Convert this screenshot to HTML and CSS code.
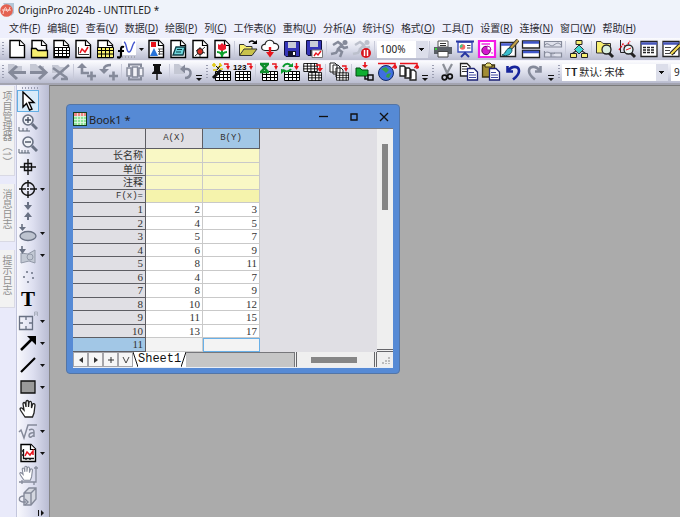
FILE: index.html
```
<!DOCTYPE html>
<html lang="zh-CN">
<head>
    <meta charset="UTF-8">
    <meta name="viewport" content="width=device-width, initial-scale=1.0">
    <title>OriginPro 2024b - UNTITLED *</title>
    <link rel="stylesheet" href="styles.css">
</head>
<body>
    <!-- Shared icon parts -->
    <svg class="defs" width="0" height="0" aria-hidden="true">
        <symbol id="page" viewBox="0 0 20 20">
            <path d="M3 1.5H13L17.5 6V18.500H3Z" fill="#fff" stroke="#000" stroke-width="1.4"/>
            <path d="M12.500 1.500V6.500H17.500" fill="#fff" stroke="#000" stroke-width="1.200"/>
        </symbol>
        <symbol id="grid" viewBox="0 0 16 10">
            <path d="M.5.5H15.500V9.500H.5Z" fill="#fff" stroke="#000"/>
            <path d="M0 3.500H16M0 6.500H16M4.500 0V10M8.500 0V10M12.500 0V10" stroke="#000" fill="none"/>
        </symbol>
        <symbol id="import" viewBox="0 0 6 7">
            <path d="M0 1H4V4" fill="none" stroke="#e8141c" stroke-width="1.300"/>
            <path d="M2 3H6L4 7Z" fill="#e8141c"/>
        </symbol>
        <symbol id="floppy" viewBox="0 0 16 16">
            <path d="M.5.5H15.500V15.500H2L.5 14Z" fill="#3535b8" stroke="#101040"/>
            <path d="M4 1H12V7H4Z" fill="#c9cdd8"/>
            <path d="M4 10H12V15.500H4Z" fill="#15152c"/>
            <path d="M9 11H11V14H9Z" fill="#fff"/>
        </symbol>
        <symbol id="undo" viewBox="0 0 20 20">
            <path d="M4.500 4V9.500H10M5 9C9 3 16 4 16 9C16 13 13 15 10 17.500" fill="none" stroke="currentColor" stroke-width="2.600"/>
        </symbol>
        <symbol id="arrow" viewBox="0 0 20 20">
            <path d="M10 4L3 10.500L10 17M3 10.500H19" fill="none" stroke="currentColor" stroke-width="3"/>
        </symbol>
        <symbol id="runner" viewBox="0 0 20 20">
            <circle cx="15" cy="3.500" r="2.500" fill="currentColor"/>
            <path d="M3 6L8 3L12 6L8 10L12 13L10 18M11 6L14 9L18 8M8 11L6 14L1 15" fill="none" stroke="currentColor" stroke-width="2.500"/>
        </symbol>
        <symbol id="hand" viewBox="0 0 20 20">
            <path d="M7 18L3 12C1 9 3 8 5 10L6 11L5 5C5 3 7 3 7.500 5L8 8V3C8 1 10.500 1 10.500 3V8L11 3.500C11.500 2 13.500 2 13.500 4V9L14.500 5.500C15 4 17 4.500 17 6L16 14L14.500 18Z" fill="#fff" stroke="currentColor" stroke-width="1.300"/>
        </symbol>
        <symbol id="magnify" viewBox="0 0 20 20">
            <path d="M13 11L18 16" stroke="currentColor" stroke-width="3"/>
            <circle cx="9" cy="7" r="5" fill="#eef1f7" stroke="currentColor" stroke-width="1.600"/>
        </symbol>
        <symbol id="caret" viewBox="0 0 5 3"><path d="M0 0H5L2.500 3Z" fill="#111"/></symbol>
        <symbol id="overflow" viewBox="0 0 6 6"><path d="M0 .5H6" stroke="#111"/><path d="M0 3H6L3 6Z" fill="#111"/></symbol>
    </svg>

    <header class="titlebar">
        <svg class="logo" viewBox="0 0 14 14"><path d="M3 0H14V10L11 13Z" fill="#b3c6d6"/><circle cx="6.500" cy="7.500" r="6.300" fill="#e46352"/><path d="M3 11C5 2 6 4 6.500 7S9 8 10 4M2 7H11" fill="none" stroke="#ffd9d2"/></svg>
        <h1>OriginPro 2024b - UNTITLED *</h1>
    </header>

    <nav class="menubar">
        <a href="#">文件(<u>F</u>)</a>
        <a href="#">编辑(<u>E</u>)</a>
        <a href="#">查看(<u>V</u>)</a>
        <a href="#">数据(<u>D</u>)</a>
        <a href="#">绘图(<u>P</u>)</a>
        <a href="#">列(<u>C</u>)</a>
        <a href="#">工作表(<u>K</u>)</a>
        <a href="#">重构(<u>U</u>)</a>
        <a href="#">分析(<u>A</u>)</a>
        <a href="#">统计(<u>S</u>)</a>
        <a href="#">格式(<u>O</u>)</a>
        <a href="#">工具(<u>T</u>)</a>
        <a href="#">设置(<u>R</u>)</a>
        <a href="#">连接(<u>N</u>)</a>
        <a href="#">窗口(<u>W</u>)</a>
        <a href="#">帮助(<u>H</u>)</a>
    </nav>

    <div class="toolbar">
        <span class="grip"></span>
        <button title="新建项目"><svg viewBox="0 0 20 20"><use href="#page"/></svg></button>
        <button title="新建文件夹"><svg viewBox="0 0 20 20"><use href="#page"/><path d="M2.500 18.500V9.500H7L9 11.500H18.500V18.500Z" fill="#f7ef70" stroke="#000" stroke-width="1.300"/></svg></button>
        <button title="新建工作簿"><svg viewBox="0 0 20 20"><use href="#page"/><use href="#grid" x="3" y="8" width="16" height="10"/></svg></button>
        <button title="新建图"><svg viewBox="0 0 20 20"><use href="#page"/><path d="M5.500 8V15.500H16" fill="none" stroke="#333"/><path d="M7 14L9 10L12 13L15 8" fill="none" stroke="#e8141c" stroke-width="1.500"/></svg></button>
        <button title="新建矩阵"><svg viewBox="0 0 20 20"><use href="#page"/><path d="M3 9H18V18H3Z" fill="#f7ef70"/><path d="M2 8.500H18.500V18.500H2.500V8M2 11.500H18M2 15H18M6.500 8V18M10.500 8V18M14.500 8V18" fill="none" stroke="#000"/></svg></button>
        <button title="新建函数图"><svg viewBox="0 0 20 20"><path d="M5 1H19V16H5Z" fill="#fff"/><path d="M7 3C10 4 9 13 12 13S15 4 18 3" fill="none" stroke="#4557cf" stroke-width="1.400"/><path d="M5 18H19" stroke="#888" stroke-dasharray="1 2"/><path d="M7 8C4 7 4 9 4 12V16C4 19 2 19 0 18M1 12H7" fill="none" stroke="#000" stroke-width="2.200"/></svg></button>
        <button class="drop" title="更多函数图"><svg viewBox="0 0 5 3"><use href="#caret"/></svg></button>
        <button title="新建布局"><svg viewBox="0 0 20 20"><use href="#page"/><path d="M5 3H10V8H5Z" fill="#e8141c"/><path d="M8 9L12 17H4Z" fill="#2673d9"/><path d="M12 10H17M12 12.500H17M12 15H17M13.500 10V16" stroke="#555"/></svg></button>
        <button title="新建备注"><svg viewBox="0 0 20 20"><use href="#page"/><path d="M5 16L8 8H17L15 16Z" fill="#6fd6dc" stroke="#0b3c44" stroke-width="1.300"/><path d="M9 10.500H14M8 13H13" stroke="#0b3c44"/></svg></button>
        <button title="新建图形对象"><svg viewBox="0 0 20 20"><use href="#page"/><path d="M5 17L15 8M10 8V18M6 11.500L15 14" stroke="#333"/><circle cx="10" cy="12.500" r="3" fill="#d52d22" stroke="#222"/></svg></button>
        <button title="新建图像"><svg viewBox="0 0 20 20"><use href="#page"/><path d="M10 10V18M5 13C8 13 10 15 10 18C10 15 12 13 15 13" fill="none" stroke="#0da12c" stroke-width="2"/><path d="M6 5L8 6L10 4L12 6L14 5V10L10 12L6 10Z" fill="#ee1c2e"/></svg></button>
        <span class="sep"></span>
        <button title="打开"><svg viewBox="0 0 20 20"><path d="M1.500 16V5.500H6L8 7.500H14V10" fill="#f7ef70" stroke="#333"/><path d="M1.500 16.500L6 10H19L14 16.500Z" fill="#c9c24a" stroke="#333"/><path d="M11 3.500C13 1 16 2 17 4" fill="none" stroke="#000" stroke-width="1.400"/><path d="M14 5H19V1Z" fill="#000"/></svg></button>
        <button title="从云端打开"><svg viewBox="0 0 20 20"><path d="M5 11.500C0 11 1 5 5 5.500C6 0 13 0 14 4.500C20 4 20 11.500 15 11.500Z" fill="#fff" stroke="#222" stroke-width="1.200"/><path d="M10 8V15" stroke="#e8141c" stroke-width="2.400"/><path d="M6 13H14L10 18.500Z" fill="#e8141c"/></svg></button>
        <button title="保存项目"><svg viewBox="0 0 20 20"><use href="#floppy" x="2" y="2" width="16" height="16"/></svg></button>
        <button title="保存窗口"><svg viewBox="0 0 20 20"><use href="#floppy" x="2" y="1" width="16" height="16"/><path d="M8 11H18.500V18.500H8Z" fill="#fff" stroke="#777"/><path d="M10 17L12 14L14 16L17 12" fill="none" stroke="#e8141c" stroke-width="1.400"/></svg></button>
        <span class="sep"></span>
        <button class="dim" title="运行"><svg viewBox="0 0 20 20"><use href="#runner"/></svg></button>
        <button class="dim light" title="暂停"><svg viewBox="0 0 20 20"><use href="#runner"/><circle cx="14" cy="14" r="5" fill="#d9141c"/><path d="M12.500 11V17M15.500 11V17" stroke="#fff" stroke-width="1.500"/></svg></button>
        <span class="sep"></span>
        <select class="zoom" aria-label="缩放"><option>100%</option></select>
        <span class="sep"></span>
        <button title="打印"><svg viewBox="0 0 20 20"><path d="M5 2H15V8H5Z" fill="#fff" stroke="#555"/><path d="M7 4.500H13M7 6.500H13" stroke="#333"/><path d="M1 8H19V15H1Z" fill="#5a5f66"/><path d="M5 12.500H15V18H5Z" fill="#fff" stroke="#444"/><path d="M2 9H4V11H2Z" fill="#3fd13f"/></svg></button>
        <button title="幻灯片放映"><svg viewBox="0 0 20 20"><path d="M3 3H17V13H3Z" fill="#fff" stroke="#3a4dbb" stroke-width="1.400"/><path d="M1 2.500H19M10 13V15M6 18L10 14L14 18" stroke="#2837a0" stroke-width="2" fill="none"/><circle cx="7.500" cy="8" r="2.800" fill="#f46c65"/><path d="M7.500 8V5.200A2.800 2.800 0 0 0 5 9Z" fill="#36cf86"/><path d="M12 6.500H15.500M12 9H15.500" stroke="#444"/></svg></button>
        <button title="发送到 PowerPoint"><svg viewBox="0 0 20 20"><path d="M2 2H18V18H2Z" fill="#fff" stroke="#f41be6" stroke-width="2.200"/><path d="M4.500 5H13" stroke="#f41be6" stroke-width="1.400"/><circle cx="9" cy="11.500" r="4.200" fill="#d516cf" stroke="#650962"/><path d="M10 11V7A4 4 0 0 1 14 11Z" fill="#fff" stroke="#b210ab"/><path d="M14 14H16" stroke="#f41be6"/></svg></button>
        <button title="更改主题"><svg viewBox="0 0 20 20"><path d="M1.500 3.500H16.500V17.500H1.500Z" fill="#fff" stroke="#222" stroke-width="1.400"/><path d="M2 5.500H16" stroke="#4b5fd0" stroke-width="2.600"/><path d="M19 1L11 10" stroke="#333" stroke-width="3.800"/><path d="M19 1L11 10" stroke="#c2a049" stroke-width="2"/><path d="M12 9C6 9 8 14 3 16C8 18 13 15 13 11Z" fill="#39bfd0" stroke="#14505a"/></svg></button>
        <button title="水平平铺"><svg viewBox="0 0 20 20"><path d="M1.500 2H18.500V9H1.500ZM1.500 11.500H18.500V18.500H1.500Z" fill="#fff" stroke="#222" stroke-width="1.300"/><path d="M2 3.500H18M2 13H18" stroke="#3f56c8" stroke-width="2.600"/></svg></button>
        <button class="dim" title="合并"><svg viewBox="0 0 20 20"><path d="M1.500 2.500H18.500V8H1.500ZM1.500 12V18H14M8 14H18.500V18H8Z" fill="#dfe1ec" stroke="currentColor" stroke-width="1.200"/><path d="M2 6C5 2 7 9 11 6S16 4 18 6M2 14C6 11 8 17 12 14" fill="none" stroke="currentColor"/></svg></button>
        <span class="sep"></span>
        <button title="项目管理器"><svg viewBox="0 0 20 20"><path d="M10 5V10M4 16V14L10 10L16 14V16" fill="none" stroke="#222" stroke-width="1.200"/><path d="M7 1.500H13V5.500H7ZM1.500 14.500H7.500V18.500H1.500ZM12.500 14.500H18.500V18.500H12.500Z" fill="#f7ef70" stroke="#222"/><path d="M10 6L14.500 10.500L10 15L5.500 10.500Z" fill="#40d5d0" stroke="#333"/></svg></button>
        <span class="sep"></span>
        <button title="查找"><svg viewBox="0 0 20 20"><path d="M1.500 14V2.500H6L8 4.500H15.500V14Z" fill="#f7ef70" stroke="#333"/><path d="M14 14L18 18" stroke="#222" stroke-width="3"/><circle cx="11.500" cy="10.500" r="4.500" fill="#d9eee0" stroke="#222" stroke-width="1.300"/></svg></button>
        <button title="查找数据"><svg viewBox="0 0 20 20"><path d="M3.500 1V13.500H10" fill="none" stroke="#222"/><path d="M2 11L6 5L9 8L13 2" fill="none" stroke="#e8141c" stroke-width="1.400" stroke-dasharray="2 1"/><path d="M14 14L18 18" stroke="#222" stroke-width="3"/><circle cx="11.500" cy="10.500" r="4.500" fill="#e8f6f4" stroke="#222" stroke-width="1.300"/><path d="M9 11L14 9" stroke="#e8141c"/></svg></button>
        <button title="结果日志"><svg viewBox="0 0 20 20"><path d="M2 2.500H18V17.500H2Z" fill="#fff" stroke="#222" stroke-width="1.300"/><path d="M2 4.500H18" stroke="#4655b8" stroke-width="2.500"/><path d="M4 8.500H16M4 11H16M4 13.500H16" stroke="#222" stroke-width="1.400" stroke-dasharray="3 1"/></svg></button>
        <button title="命令窗口"><svg viewBox="0 0 20 20"><path d="M2 2.500H18V17.500H2Z" fill="#fff" stroke="#222" stroke-width="1.300"/><path d="M2 4.500H18" stroke="#4655b8" stroke-width="2.500"/><path d="M4 8.500H10M4 11.500H9M4 14.500H14" stroke="#444"/><path d="M19 6L10 15" stroke="#222" stroke-width="4"/><path d="M19 6L10 15" stroke="#f6dc51" stroke-width="2"/></svg></button>
    </div>

    <div class="toolbar second">
        <span class="grip"></span>
        <button class="dim" title="后退"><svg viewBox="0 0 20 20"><path d="M1 2H7L9 4H15V10H1Z" class="ghost"/><use href="#arrow"/></svg></button>
        <button class="dim" title="前进"><svg viewBox="0 0 20 20"><path d="M1 2H7L9 4H15V10H1Z" class="ghost"/><use href="#arrow" transform="matrix(-1 0 0 1 20 0)"/></svg></button>
        <button class="dim" title="向上"><svg viewBox="0 0 20 20"><path d="M1 3H7L9 5H13V11H1Z" class="ghost"/><path d="M2 17L18 3M2 6L16 16M10 17H17" stroke="currentColor" stroke-width="2.500"/></svg></button>
        <span class="sep"></span>
        <button class="dim" title="导出文件夹"><svg viewBox="0 0 20 20"><path d="M5 4V11H12M14.500 9.500V18.500M10 14H19" stroke="currentColor" stroke-width="2.600" fill="none"/><path d="M0 6L5 1L10 6Z" fill="currentColor"/></svg></button>
        <button class="dim" title="添加文件夹"><svg viewBox="0 0 20 20"><path d="M5 7C5 4 8 3 12 3M14.500 9.500V18.500M10 14H19" stroke="currentColor" stroke-width="2.600" fill="none"/><path d="M0 7H10L5 12Z" fill="currentColor"/></svg></button>
        <span class="sep"></span>
        <button class="dim" title="同步"><svg viewBox="0 0 20 20"><path d="M2 6H6V14H2ZM7.500 5H12.500V15H7.500ZM14 6H18V14H14Z" fill="#f3f3f8" stroke="currentColor" stroke-width="1.400"/><path d="M4 5V2.500H16V5M16 15V17.500H4V15" fill="none" stroke="currentColor" stroke-width="2"/></svg></button>
        <button title="固定"><svg viewBox="0 0 20 20"><path d="M6 2H14V4H13V9L15 11V12H5V11L7 9V4H6Z" fill="#111"/><path d="M10 12V18" stroke="#111" stroke-width="1.400"/></svg></button>
        <span class="sep"></span>
        <button class="dim" title="返回"><svg viewBox="0 0 20 20"><path d="M1 2H6L8 4H11V12H1Z" class="ghost"/><path d="M10 7H14C19 7 19 16 12 16" fill="none" stroke="currentColor" stroke-width="2.500"/><path d="M7 7L12 2.500V11.500Z" fill="currentColor"/></svg></button>
        <button class="more" title="工具栏选项"><svg viewBox="0 0 6 6"><use href="#overflow"/></svg></button>
        <span class="grip"></span>
        <button title="导入向导"><svg viewBox="0 0 20 20"><use href="#grid" x="4" y="9" width="16" height="10"/><path d="M10 8L2 16" stroke="#111" stroke-width="3"/><path d="M3 1V5M1 3H5M9 1V4M2 8H6M6 6L11 3M9 7H12" stroke="#e0c810" stroke-width="1.600"/><path d="M5 4L8 7M9 4L6 8" stroke="#111"/><use href="#import" x="13" y="1" width="6" height="7"/></svg></button>
        <button title="导入 ASCII"><svg viewBox="0 0 20 20"><use href="#grid" x="2" y="9" width="16" height="10"/><text x="0" y="8" class="digits">123</text><use href="#import" x="14" y="1" width="6" height="7"/></svg></button>
        <span class="sep"></span>
        <button title="导入 Excel"><svg viewBox="0 0 20 20"><use href="#grid" x="3" y="9" width="16" height="10"/><path d="M1 2H10M1 10H10M2 2L9 10M9 2L2 10" stroke="#0c8c2b" stroke-width="2.400"/><use href="#import" x="13" y="1" width="6" height="7"/></svg></button>
        <button title="重新导入"><svg viewBox="0 0 20 20"><use href="#grid" x="3" y="9" width="16" height="10"/><path d="M2 5C4 1 8 1 10 4M10 7C8 10 4 10 2 8" fill="none" stroke="#0b9a30" stroke-width="2"/><path d="M7 5H12V1ZM0 7V12L5 8Z" fill="#0b9a30"/><path d="M15.500 1V5" stroke="#e8141c" stroke-width="1.500"/><path d="M13 4H18L15.500 8Z" fill="#e8141c"/></svg></button>
        <button title="导入数据表"><svg viewBox="0 0 20 20"><use href="#grid" x="0" y="1" width="15" height="9"/><use href="#grid" x="5" y="10" width="14" height="9"/><path d="M13 3H17V7" fill="none" stroke="#e8141c" stroke-width="1.500"/><path d="M14 6H20L17 10Z" fill="#e8141c"/></svg></button>
        <span class="sep"></span>
        <button title="导入多个文件"><svg viewBox="0 0 20 20"><path d="M1 1H6L8 3V10H1ZM4 3H9L11 5V12H4ZM7 6H12L14 8V15H7Z" fill="#fff" stroke="#222"/><use href="#grid" x="7" y="10" width="13" height="9"/><use href="#import" x="13" y="3" width="6" height="7"/></svg></button>
        <span class="sep"></span>
        <button title="连接文件"><svg viewBox="0 0 20 20"><path d="M1 14V6H5L7 8H13V14Z" fill="#0fae31" stroke="#034d12"/><path d="M10 0V4" stroke="#e8141c" stroke-width="1.600"/><path d="M7 3H13L10 6Z" fill="#e8141c"/><path d="M10 14V17H13M13 13H18V18H13Z" fill="none" stroke="#111" stroke-width="1.500"/></svg></button>
        <button title="连接网页"><svg viewBox="0 0 20 20"><circle cx="9" cy="11" r="7.500" fill="#3f6fe0" stroke="#132b66"/><path d="M4 7L9 5L12 8L9 11L7 9ZM10 12L14 11L12 16L9 15Z" fill="#37a04a"/><path d="M1 1.500H18V7M15.500 6L18 3L20 6" fill="none" stroke="#e8141c" stroke-width="1.500"/></svg></button>
        <button title="连接多个文件"><svg viewBox="0 0 20 20"><path d="M1 4H5L7 6V14H1ZM6 6H10L12 8V16H6ZM11 8H15L17 10V18H11Z" fill="#fff" stroke="#222" stroke-width="1.300"/><path d="M1 1.500H18V7M15.500 6L18 3L20 6" fill="none" stroke="#e8141c" stroke-width="1.500"/></svg></button>
        <button class="more" title="工具栏选项"><svg viewBox="0 0 6 6"><use href="#overflow"/></svg></button>
        <span class="grip"></span>
        <button title="剪切"><svg viewBox="0 0 20 20"><path d="M6 2L11 13M15 2L9 13" stroke="#8b8f98" stroke-width="2.200"/><circle cx="7.500" cy="15.500" r="2.300" fill="none" stroke="#111" stroke-width="1.700"/><circle cx="13" cy="14.500" r="2.300" fill="none" stroke="#111" stroke-width="1.700"/></svg></button>
        <button title="复制"><svg viewBox="0 0 20 20"><path d="M1.500 1.500H8L11 4.500V14H1.500Z" fill="#fff" stroke="#222" stroke-width="1.300"/><path d="M3 4.500H8M3 7H9M3 9.500H8" stroke="#333"/><path d="M8.500 6.500H15L18.500 10V18H8.500Z" fill="#fff" stroke="#1d2373" stroke-width="1.300"/><path d="M10 10.500H15M10 13H17M10 15.500H17" stroke="#3c479d"/></svg></button>
        <button title="粘贴"><svg viewBox="0 0 20 20"><path d="M1.500 3H13.500V15H1.500Z" fill="#a28d35" stroke="#3c3310" stroke-width="1.300"/><path d="M4 5V3L6 1H9L11 3V5Z" fill="#e9dd77" stroke="#3c3310"/><path d="M8.500 6.500H15L18.500 10V18H8.500Z" fill="#fff" stroke="#1d2373" stroke-width="1.300"/><path d="M10 10.500H15M10 13H17M10 15.500H17" stroke="#3c479d"/></svg></button>
        <button class="navy" title="撤消"><svg viewBox="0 0 20 20"><use href="#undo"/></svg></button>
        <button class="dim" title="恢复"><svg viewBox="0 0 20 20"><use href="#undo" transform="matrix(-1 0 0 1 20 0)"/></svg></button>
        <button class="more" title="工具栏选项"><svg viewBox="0 0 6 6"><use href="#overflow"/></svg></button>
        <span class="grip"></span>
        <select class="font" aria-label="字体"><option>T𝐓 默认: 宋体</option></select>
        <input class="size" type="text" value="9" aria-label="字号">
    </div>

    <div class="workspace">
        <aside class="docks">
            <button class="dock-first">项目管理器（1）</button>
            <button>消息日志</button>
            <button>提示日志</button>
        </aside>

        <div class="tools">
            <span class="grip-h"></span>
            <button class="active" title="指针"><svg viewBox="0 0 20 20"><path d="M5 1V16L8.500 12.500L11.500 19L14 18L11 11.500H16Z" fill="#fff" stroke="#000" stroke-width="1.400"/></svg></button>
            <button class="steel" title="放大"><svg viewBox="0 0 20 20"><use href="#magnify" x="1"/><path d="M7 7H13M10 4V10" stroke="#3d4657" stroke-width="1.300"/><path d="M1 14V18H12M5 15V18M9 15V18" fill="none" stroke="#5b6475"/></svg></button>
            <button class="steel" title="缩小"><svg viewBox="0 0 20 20"><use href="#magnify" x="1"/><path d="M7 7H13" stroke="#3d4657" stroke-width="1.300"/><path d="M1 14V18H12M4 15V18M7 15V18M10 15V18" fill="none" stroke="#5b6475"/></svg></button>
            <button title="屏幕读取"><svg viewBox="0 0 20 20"><path d="M10 2V18M2 10H18M6.500 6.500H13.500V13.500H6.500Z" fill="none" stroke="#111" stroke-width="1.400"/></svg></button>
            <button title="数据读取"><svg viewBox="0 0 20 20"><circle cx="10" cy="10" r="6.500" fill="none" stroke="#111" stroke-width="1.400"/><path d="M10 1V8M10 12V19M1 10H8M12 10H19M9 10H11" stroke="#111" stroke-width="1.400"/></svg><svg class="caret" viewBox="0 0 5 3"><use href="#caret"/></svg></button>
            <button class="steel" title="数据选择"><svg viewBox="0 0 20 20"><path d="M10 1V5M10 15V19" stroke="currentColor" stroke-width="2"/><path d="M6 4H14L10 9ZM6 16H14L10 11Z" fill="currentColor"/></svg></button>
            <button class="steel" title="区域选择"><svg viewBox="0 0 20 20"><path d="M4 1V5" stroke="currentColor" stroke-width="1.600"/><path d="M1 4H8L4.500 8Z" fill="currentColor"/><ellipse cx="10" cy="13" rx="8" ry="4.500" fill="#bdc3cf" stroke="currentColor" stroke-width="1.300"/></svg><svg class="caret" viewBox="0 0 5 3"><use href="#caret"/></svg></button>
            <button class="steel" title="屏蔽点"><svg viewBox="0 0 20 20"><path d="M3 8L10 9L17 5V18L11 16L3 18Z" fill="#c3c9d4" stroke="#9299a8"/><path d="M4 1V5" stroke="currentColor" stroke-width="1.600"/><path d="M1 4H8L4.500 9Z" fill="currentColor"/><circle cx="12" cy="12" r="3" fill="none" stroke="#9299a8"/></svg><svg class="caret" viewBox="0 0 5 3"><use href="#caret"/></svg></button>
            <button class="steel" title="绘制数据"><svg viewBox="0 0 20 20"><path d="M8 5H10M13 6H15M5 10H7M14 11H16M9 15H11" stroke="currentColor" stroke-width="1.500"/></svg></button>
            <button class="text-tool" title="文本">T</button>
            <button class="steel" title="批注"><svg viewBox="0 0 20 20"><path d="M1.500 5.500H14.500V18.500H1.500ZM8 6V9M8 15V18M2 12H5M11 12H14" fill="none" stroke="currentColor" stroke-width="1.300"/><path d="M16.500 5V1H19.500V5M16.500 3H19.500" fill="none" stroke="#a9afbd"/></svg><svg class="caret" viewBox="0 0 5 3"><use href="#caret"/></svg></button>
            <button title="箭头"><svg viewBox="0 0 20 20"><path d="M3 17L14 6" stroke="#000" stroke-width="2.500"/><path d="M9 3H18V12Z" fill="#000"/></svg><svg class="caret" viewBox="0 0 5 3"><use href="#caret"/></svg></button>
            <button title="直线"><svg viewBox="0 0 20 20"><path d="M3 17L17 3" stroke="#000" stroke-width="2.200"/></svg><svg class="caret" viewBox="0 0 5 3"><use href="#caret"/></svg></button>
            <button title="矩形"><svg viewBox="0 0 20 20"><path d="M3 4H17V16H3Z" fill="#9a9a9a" stroke="#111" stroke-width="1.300"/></svg><svg class="caret" viewBox="0 0 5 3"><use href="#caret"/></svg></button>
            <button title="平移"><svg viewBox="0 0 20 20"><use href="#hand"/></svg></button>
            <button class="dim" title="公式"><svg viewBox="0 0 20 20"><path d="M1 11L3 9L6 17L10 4H19" fill="none" stroke="currentColor" stroke-width="1.500"/><path d="M11 9C15 7 16 9 16 11V16M16 12C10 11 10 17 13 16L16 14" fill="none" stroke="currentColor" stroke-width="1.500"/></svg><svg class="caret" viewBox="0 0 5 3"><use href="#caret"/></svg></button>
            <button title="插入图"><svg viewBox="0 0 20 20"><use href="#page"/><path d="M5.500 6V15.500H16M4 8H6M4 12H6M8 15V17M12 15V17" fill="none" stroke="#111" stroke-width="1.300"/><path d="M7 13L9 9L12 12L15 8V12" fill="none" stroke="#e8141c" stroke-width="1.500"/></svg><svg class="caret" viewBox="0 0 5 3"><use href="#caret"/></svg></button>
            <button class="dim" title="缩放平移"><svg viewBox="0 0 20 20"><use href="#hand" width="17" height="17"/><path d="M18 1V17H1M16 3H20M4 15V19M16 17V20" fill="none" stroke="currentColor" stroke-width="1.300"/></svg></button>
            <button class="dim" title="旋转"><svg viewBox="0 0 20 20"><path d="M6 6L11 1H18V12L13 18H6ZM6 6H13V18M13 6L18 1" fill="#d4d7e0" stroke="currentColor" stroke-width="1.400"/><path d="M6 9C0 9 0 15 5 15H8M7 12L10 15L7 18" fill="none" stroke="currentColor" stroke-width="1.400"/></svg></button>
            <button class="more" title="工具栏选项"><svg viewBox="0 0 6 6"><path d="M.5 0V6" stroke="#111"/><path d="M3 0V6L6 3Z" fill="#111"/></svg></button>
        </div>

        <main class="canvas">
            <section class="book">
                <header class="book-title">
                    <svg class="book-icon" viewBox="0 0 14 14"><path d="M0 0H14V14H0Z" fill="#173d1d"/><path d="M1 1H13V4H1Z" fill="#f08585"/><path d="M1 4H13V13H1Z" fill="#8ee49a"/><path d="M1 4.500H13M1 7.500H13M1 10.500H13M4.500 1V13M7.500 1V13M10.500 1V13" stroke="#e4f7e6" stroke-width=".8"/></svg>
                    <h2>Book1 *</h2>
                    <button title="最小化"><svg viewBox="0 0 10 10"><path d="M0 4.500H9" stroke="#111" stroke-width="1.300"/></svg></button>
                    <button title="最大化"><svg viewBox="0 0 10 10"><path d="M2 2H8V8H2Z" fill="none" stroke="#111" stroke-width="1.400"/></svg></button>
                    <button title="关闭"><svg viewBox="0 0 10 10"><path d="M1 1L9 9M9 1L1 9" stroke="#111" stroke-width="1.300"/></svg></button>
                </header>
                <div class="book-body">
                    <div class="sheet">
                        <table>
                            <thead>
                                <tr><th></th><th>A(X)</th><th class="selected">B(Y)</th></tr>
                            </thead>
                            <tbody class="labels">
                                <tr><th>长名称</th><td></td><td></td></tr>
                                <tr><th>单位</th><td></td><td></td></tr>
                                <tr><th>注释</th><td></td><td></td></tr>
                                <tr><th class="formula">F(x)=</th><td></td><td></td></tr>
                            </tbody>
                            <tbody>
                                <tr><th>1</th><td>2</td><td>3</td></tr>
                                <tr><th>2</th><td>4</td><td>5</td></tr>
                                <tr><th>3</th><td>5</td><td>7</td></tr>
                                <tr><th>4</th><td>6</td><td>9</td></tr>
                                <tr><th>5</th><td>8</td><td>11</td></tr>
                                <tr><th>6</th><td>4</td><td>7</td></tr>
                                <tr><th>7</th><td>8</td><td>9</td></tr>
                                <tr><th>8</th><td>10</td><td>12</td></tr>
                                <tr><th>9</th><td>11</td><td>15</td></tr>
                                <tr><th>10</th><td>13</td><td>17</td></tr>
                                <tr class="new-row"><th>11</th><td></td><td class="current"></td></tr>
                            </tbody>
                        </table>
                        <div class="vscroll"><span></span></div>
                    </div>
                    <footer class="sheet-bar">
                        <button title="上一个"><svg viewBox="0 0 8 8"><path d="M6 1V7L2 4Z" fill="#333"/></svg></button>
                        <button title="下一个"><svg viewBox="0 0 8 8"><path d="M2 1V7L6 4Z" fill="#333"/></svg></button>
                        <button title="添加"><svg viewBox="0 0 8 8"><path d="M4 1V7M1 4H7" stroke="#333"/></svg></button>
                        <button title="列表"><svg viewBox="0 0 8 8"><path d="M1 1L4 7L7 1" fill="none" stroke="#444"/></svg></button>
                        <a class="sheet-tab" href="#"><svg viewBox="0 0 5 15"><path d="M0 0L5 15" stroke="#111"/></svg>Sheet1<svg viewBox="0 0 5 15"><path d="M5 0L0 15" stroke="#111"/></svg></a>
                        <span class="tab-space"></span>
                        <div class="hscroll"><span></span></div>
                        <svg class="resize" viewBox="0 0 14 14"><path d="M11 5V12M8 8V12M5 10V12" stroke="#bbb" stroke-width="2" stroke-dasharray="2 1"/></svg>
                    </footer>
                </div>
            </section>
        </main>
    </div>
</body>
</html>
```

FILE: styles.css
```
* {
    box-sizing: border-box;
}
body {
    margin: 0;
    min-height: 100vh;
    display: flex;
    flex-direction: column;
    overflow: hidden;
    background-color: #e9eafa;
    color: #222;
    font-family: "Noto Sans", "Noto Sans CJK SC", sans-serif;
    font-size: 10px;
}
button {
    display: flex;
    align-items: center;
    justify-content: center;
    padding: 0;
    border: none;
    background: none;
    font: inherit;
    color: inherit;
}
svg {
    display: block;
    flex: none;
}
.defs {
    position: absolute;
}
.titlebar {
    display: flex;
    align-items: center;
    gap: 4px;
    height: 20px;
    background-color: #eff3fa;
}
.titlebar h1 {
    margin: 0;
    font-size: 10px;
    font-weight: normal;
}
.logo {
    width: 14px;
    height: 14px;
}
.menubar {
    display: flex;
    gap: 7px;
    height: 18px;
    padding-left: 9px;
    background-color: #eeeffc;
    line-height: 16px;
    white-space: nowrap;
}
.menubar a {
    color: #2b2b33;
    text-decoration: none;
}

/* Toolbars */
.toolbar {
    display: flex;
    align-items: center;
    height: 23px;
    background: linear-gradient(#fbfbfe, #dddfec 50%, #b9bccf);
    border-bottom: 1px solid #f4f4fc;
    overflow: hidden;
}
.toolbar button {
    flex: none;
    width: 22px;
    height: 22px;
}
.toolbar button svg {
    width: 20px;
    height: 20px;
}
.toolbar.second {
    height: 24px;
    border-bottom: 2px solid #a3a4b0;
}
.toolbar .drop {
    width: 7px;
}
.toolbar .drop svg {
    width: 5px;
    height: 3px;
}
.toolbar .more {
    align-items: flex-end;
    width: 10px;
    padding-bottom: 2px;
}
.toolbar .more svg {
    width: 6px;
    height: 6px;
}
.grip {
    flex: none;
    width: 2px;
    height: 14px;
    margin: 0 2px;
    background: repeating-linear-gradient(#9a9db0 0 1px, transparent 1px 3px);
}
.sep {
    flex: none;
    width: 1px;
    height: 16px;
    margin: 0 2px 0 1px;
    background-color: #c8cad9;
}
.dim {
    color: #858a9a;
}
.light {
    color: #bcc0cc;
}
.steel {
    color: #697183;
}
.navy {
    color: #16249b;
}
.ghost {
    fill: #c5c8d4;
}
.digits {
    font: bold 8px "Liberation Sans", sans-serif;
}
select,
.size {
    height: 17px;
    border: none;
    border-radius: 0;
    padding: 0 3px;
    color: #222;
    background-color: #fff;
    font-family: "Noto Sans", "Noto Sans CJK SC", sans-serif;
    font-size: 10px;
}
select {
    flex: none;
    appearance: none;
    background-image: linear-gradient(#111, #111), linear-gradient(#111, #111), linear-gradient(#111, #111), linear-gradient(#dcdeea, #dcdeea);
    background-size: 5px 1px, 3px 1px, 1px 1px, 12px 17px;
    background-position: right 4px top 7px, right 5px top 8px, right 6px top 9px, right top;
    background-repeat: no-repeat;
}
.zoom {
    width: 51px;
}
.font {
    width: 106px;
    margin-right: 3px;
}
.size {
    flex: none;
    width: 30px;
}

/* Left side */
.workspace {
    flex: 1;
    display: flex;
}
.docks {
    display: flex;
    flex-direction: column;
    gap: 8px;
    width: 16px;
    padding-top: 1px;
}
.docks button {
    justify-content: flex-start;
    width: 15px;
    height: 58px;
    padding-top: 5px;
    background-color: #f2f2f2;
    border-right: 1px solid #d9d9e4;
    border-bottom: 1px solid #d9d9e4;
    color: #909090;
    writing-mode: vertical-rl;
    line-height: 14px;
}
.docks .dock-first {
    height: 90px;
}
.tools {
    width: 33px;
    border-left: 1px solid #c3c6dc;
    background: linear-gradient(to right, #f8f8fd, #dddff0 50%, #b9bcd2);
}
.grip-h {
    display: block;
    width: 18px;
    height: 2px;
    margin: 2px 0 1px 5px;
    background: repeating-linear-gradient(to right, #9a9db0 0 1px, transparent 1px 3px);
}
.tools button {
    justify-content: flex-start;
    gap: 2px;
    width: 31px;
    height: 22px;
    padding-left: 1px;
}
.tools button svg {
    width: 20px;
    height: 20px;
}
.tools button .caret {
    width: 5px;
    height: 3px;
}
.tools .active {
    width: 22px;
    padding: 0;
    border: 1px solid #62aee4;
    background-color: #d8ebf9;
}
.tools .text-tool {
    padding-left: 4px;
    color: #000;
    font: bold 21px "Liberation Serif", serif;
}
.tools .more {
    justify-content: flex-end;
    height: 10px;
    padding-right: 4px;
}
.tools .more svg {
    width: 6px;
    height: 6px;
}
.canvas {
    flex: 1;
    padding: 18px 0 0 16px;
    background-color: #ababab;
    border-top: 1px solid #7b7b7b;
    border-left: 1px solid #858585;
}

/* Workbook window */
.book {
    width: 334px;
    padding: 0 6px 5px;
    border: 1px solid #5375a6;
    border-radius: 4px;
    background-color: #568ad5;
}
.book-title {
    display: flex;
    align-items: center;
    height: 23px;
}
.book-title h2 {
    flex: 1;
    margin: 5px 0 0 2px;
    font-size: 11px;
    font-weight: normal;
}
.book-icon {
    width: 14px;
    height: 14px;
    margin-top: 4px;
}
.book-title button {
    width: 30px;
    height: 23px;
}
.book-title button:last-child {
    width: 18px;
    margin-left: 6px;
}
.book-title button svg {
    width: 10px;
    height: 10px;
}
.book-body {
    border-top: 1px solid #77797f;
    border-bottom: 1px solid #e9eef6;
    background-color: #e0dfe4;
}
.sheet {
    display: flex;
    justify-content: space-between;
}
table {
    width: 187px;
    table-layout: fixed;
    border-collapse: separate;
    border-spacing: 0;
    font: 11px/11px "Liberation Serif", "Noto Sans CJK SC", serif;
    color: #333;
}
th,
td {
    height: 13px;
    padding: 0 2px 0 0;
    border-right: 1px solid #c9c9c9;
    border-bottom: 1px solid #c9c9c9;
    background-color: #fff;
    text-align: right;
    font-weight: normal;
}
th {
    width: 73px;
    border-color: #5d5d63;
    background-color: #e0dfe4;
}
tbody tr:nth-child(odd) td,
tbody tr:nth-child(odd) th {
    height: 14px;
}
thead th {
    width: 57px;
    height: 20px;
    padding: 0;
    text-align: center;
    font-family: "Liberation Mono", monospace;
    font-size: 9px;
}
thead th:first-child {
    width: 73px;
}
.labels th {
    font-size: 10px;
}
.labels td {
    background-color: #f9f8c5;
}
.labels tr:last-child td {
    background-color: #f5f3ac;
}
.labels .formula {
    font-family: "Liberation Mono", monospace;
    font-size: 9px;
}
.selected,
.new-row th {
    background-color: #a2c7e6;
}
.new-row td {
    background-color: #f3f3f3;
}
.new-row .current {
    border: 1px solid #68b0e8;
}
.vscroll {
    width: 16px;
    padding: 15px 5px 0;
    border-bottom: 3px double #66666a;
    background-color: #efefef;
}
.vscroll span {
    display: block;
    width: 6px;
    height: 66px;
    background-color: #868686;
}
.sheet-bar {
    display: flex;
    height: 15px;
    background-color: #efefef;
}
.sheet-bar button {
    width: 15px;
    border: 1px solid #a6a6aa;
    background-color: #f6f6f6;
}
.sheet-bar button svg {
    width: 8px;
    height: 8px;
}
.sheet-tab {
    display: flex;
    background-color: #fff;
    color: #111;
    font: 12px/15px "Liberation Mono", monospace;
    text-decoration: none;
}
.sheet-tab svg {
    width: 5px;
    height: 15px;
}
.tab-space {
    flex: 1;
    border-top: 1px solid #77777b;
    border-right: 1px solid #77777b;
    background-color: #c6c6c6;
}
.hscroll {
    width: 81px;
    margin-left: 1px;
    padding: 5px 0 0 14px;
    border-left: 1px solid #66666a;
    border-right: 3px double #66666a;
}
.hscroll span {
    display: block;
    width: 46px;
    height: 6px;
    background-color: #868686;
}
.resize {
    width: 16px;
    height: 14px;
}
```
